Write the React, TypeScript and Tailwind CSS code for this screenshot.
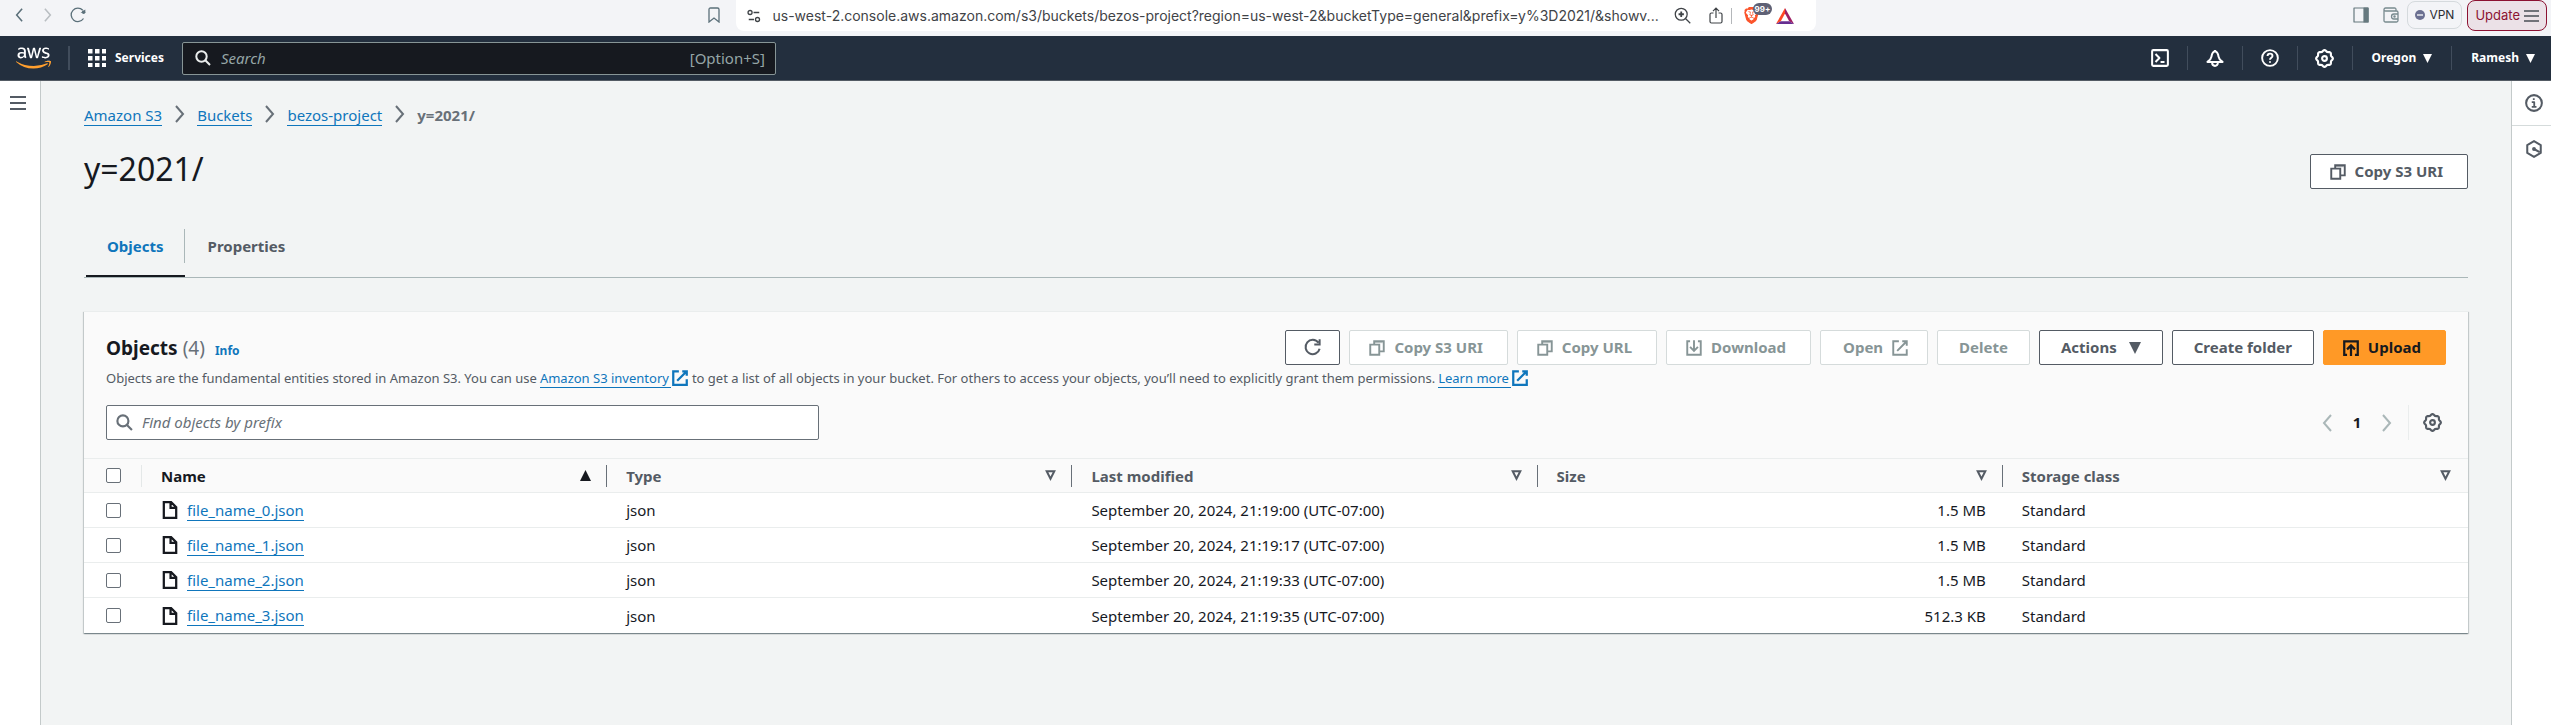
import type { ReactNode } from "react";
import { FaAws, FaBrave } from "react-icons/fa6";

function Icon({ children, className = "size-[18px]", strokeWidth = 2 }: { children: ReactNode; className?: string; strokeWidth?: number }) {
  return (
    <svg viewBox="0 0 16 16" fill="none" stroke="currentColor" strokeWidth={strokeWidth} strokeLinejoin="round" className={`shrink-0 ${className}`} aria-hidden="true">
      {children}
    </svg>
  );
}

const gearOutline =
  Array.from({ length: 96 }, (_, i) => {
    const a = (i / 96) * Math.PI * 2;
    const r = 6.5 + 0.55 * Math.cos(8 * a);
    return `${i ? "L" : "M"}${(8 + r * Math.sin(a)).toFixed(2)} ${(8 - r * Math.cos(a)).toFixed(2)}`;
  }).join("") + "Z";

const CopyIcon = () => (
  <Icon strokeWidth={1.7}>
    <path d="M2 5h8v9H2zM5.5 5V2H14v9h-4" strokeLinejoin="miter" />
    <path d="M6 3.2h7" strokeWidth="1" opacity=".5" />
  </Icon>
);
const DownloadIcon = () => (
  <Icon strokeWidth={1.7}>
    <path d="M4.5 2H2v12h12V2h-2.5M8 1v9M4.5 7 8 10.5 11.5 7" strokeLinejoin="miter" />
  </Icon>
);
const UploadIcon = () => (
  <Icon>
    <path d="M4.5 14H2V2h12v12h-2.5M8 15V6M4.5 9.2 8 5.7l3.5 3.5" strokeLinejoin="miter" />
  </Icon>
);
const ExternalIcon = ({ strokeWidth = 1.7 }: { strokeWidth?: number }) => (
  <Icon strokeWidth={strokeWidth}>
    <path d="M10 2h4v4M5.5 10.5 14 2M14 9v5H2V2h5" strokeLinejoin="miter" />
  </Icon>
);
const SearchIcon = ({ className }: { className?: string }) => (
  <Icon className={className}>
    <circle cx="6.5" cy="6.5" r="5.2" />
    <path d="m10.3 10.3 4.7 4.7" />
  </Icon>
);
const GearIcon = () => (
  <Icon className="size-[19px]" strokeWidth={1.8}>
    <path d={gearOutline} />
    <circle cx="8" cy="8" r="2" />
  </Icon>
);
const FileIcon = () => (
  <Icon>
    <path d="M2.5 1h6.5l4.5 4.5V15h-11zM8.500 1v5h5" strokeLinejoin="miter" />
  </Icon>
);
const Chevron = ({ left = false, className = "h-[18px]" }: { left?: boolean; className?: string }) => (
  <svg viewBox="0 0 10 18" fill="none" stroke="currentColor" strokeWidth="2" className={`w-2.5 shrink-0 ${className}`} aria-hidden="true">
    <path d={left ? "M9 1 2 9l7 8" : "M1 1l7 8-7 8"} />
  </svg>
);
const Triangle = ({ className = "size-[11px]" }: { className?: string }) => (
  <svg viewBox="0 0 10 10" fill="currentColor" className={`shrink-0 ${className}`} aria-hidden="true">
    <path d="M0 0h10L5 10z" />
  </svg>
);

function BrowserBar() {
  return (
    <div className="grid h-9 grid-cols-[1fr_minmax(0,1080px)_1fr] items-start bg-[#f3f4f7]">
      <div className="flex h-[30px] items-center pr-4 pl-3.5 text-[#5b707a]">
        <button aria-label="Back">
          <Chevron left className="h-[14px]" />
        </button>
        <button aria-label="Forward" className="ml-[19px] text-[#b9bec2]">
          <Chevron className="h-[14px]" />
        </button>
        <button aria-label="Reload" className="ml-[17px]">
          <Icon className="size-4" strokeWidth={1.3}>
            <path d="M13.5 11.5A6.7 6.7 0 1 1 12.8 3.3" />
            <path d="M10.5 5.8h4.8V2.5z" fill="currentColor" stroke="none" />
            <circle cx="13.6" cy="5.2" r="1.7" fill="currentColor" stroke="none" />
          </Icon>
        </button>
        <button aria-label="Bookmark this page" className="ml-auto">
          <svg viewBox="0 0 12 16" fill="none" stroke="currentColor" strokeWidth="1.3" className="h-4 w-3">
            <path d="M1 2.500C1 1.500 1.500 1 2.500 1h7c1 0 1.500.5 1.500 1.500V15l-5-4-5 4z" />
          </svg>
        </button>
      </div>

      <div className="flex h-[31px] items-center rounded-b-lg bg-white pr-[22px] pl-[11px] text-[#3f4347]">
        <Icon className="size-3.5" strokeWidth={1.5}>
          <circle cx="3.5" cy="4" r="2.3" />
          <circle cx="12" cy="12" r="2.3" />
          <path d="M7.5 4H14M2 12h6" />
        </Icon>
        <span className="ml-3 min-w-0 flex-1 truncate font-[Inter,sans-serif] text-sm">
          us-west-2.console.aws.amazon.com/s3/buckets/bezos-project?region=us-west-2&amp;bucketType=general&amp;prefix=y%3D2021/&amp;showv...
        </span>
        <button aria-label="Zoom" className="ml-3">
          <Icon className="size-[17px]" strokeWidth={1.2}>
            <circle cx="6.8" cy="6.8" r="5.6" />
            <path d="m10.8 10.8 4.5 4.5" />
            <path d="M6.8 4.3v5M4.3 6.8h5" strokeWidth="1.7" />
          </Icon>
        </button>
        <button aria-label="Share" className="ml-[18px]">
          <svg viewBox="0 0 14 17" fill="none" stroke="currentColor" strokeWidth="1.2" className="h-[17px] w-3.5">
            <path d="M4.500 6h-2C1.500 6 1 6.500 1 7.500v7c0 1 .5 1.500 1.500 1.500h9c1 0 1.500-.5 1.500-1.500v-7c0-1-.5-1.500-1.500-1.500h-2M7 11V1.500M4 4.200l3-3 3 3" />
          </svg>
        </button>
        <span className="ml-2 h-4 w-px bg-[#b4b7ba]" />
        <button aria-label="Brave Shields" className="relative ml-[11px] text-[#fb542b]">
          <FaBrave className="size-[17px]" />
          <span className="absolute -top-1 left-2.5 rounded-md bg-[#5e6175] px-0.5 font-[Inter,sans-serif] text-[8px] leading-3 font-bold text-white">99+</span>
        </button>
        <button aria-label="Brave Rewards" className="ml-4">
          <svg viewBox="0 0 18 16" className="h-4 w-[18px]">
            <path d="M9 0 0 16l4.800-2.800L9 5.500z" fill="#ff4724" />
            <path d="M9 0l9 16-4.800-2.800L9 5.500z" fill="#9e1f63" />
            <path d="M0 16h18l-4.800-2.800H4.800z" fill="#662d91" />
          </svg>
        </button>
      </div>

      <div className="flex items-start justify-end pr-1 font-[Inter,sans-serif] text-xs">
        <button aria-label="Sidebar" className="mt-[7px] text-[#66797f]">
          <Icon className="size-4" strokeWidth={1.2}>
            <path d="M1 1h14v14H1z" />
            <path d="M11 1h4v14h-4z" fill="currentColor" />
          </Icon>
        </button>
        <button aria-label="Wallet" className="mt-[7px] mr-2 ml-3.5 text-[#788a8f]">
          <Icon className="size-4" strokeWidth={1.3}>
            <path d="M13 4V2.500C13 1.500 12.500 1 11.500 1h-9a1.500 1.500 0 0 0 0 3h11c1 0 1.500.5 1.500 1.500v8c0 1-.5 1.500-1.500 1.500h-11C1.500 15 1 14.500 1 13.500v-11M15 7h-4a2.500 2.500 0 0 0 0 5h4" />
            <circle cx="11.5" cy="9.5" r=".6" fill="currentColor" />
          </Icon>
        </button>
        <button className="mt-px mr-[5px] flex h-7 items-center gap-1 rounded-lg border border-[#d5dadd] px-[7px] text-[#2b2e33]">
          <svg viewBox="0 0 10 10" className="size-2.5">
            <circle cx="5" cy="5" r="5" fill="#6b7091" />
            <path d="M2 5h6" stroke="#f3f4f7" strokeWidth="1.4" />
          </svg>
          VPN
        </button>
        <button className="flex h-[31px] items-center gap-1 rounded-lg border border-[#8c1232] bg-[#ebe1e7] px-[7px] text-[13px] text-[#8c1232]">
          Update
          <svg viewBox="0 0 15 12" stroke="#4a4d55" strokeWidth="1.3" className="h-3 w-[15px]">
            <path d="M0 1h15M0 6h15M0 11h15" />
          </svg>
        </button>
      </div>
    </div>
  );
}

const NavDivider = () => <span className="h-6 w-px shrink-0 bg-[#414d5c]" />;

function TopNav() {
  return (
    <header className="flex h-[45px] items-center border-b border-[#545b64] bg-[#232f3e] text-xs font-bold text-white">
      <a href="#home" aria-label="AWS Console Home" className="mr-[17px] ml-4">
        <svg className="absolute size-0" aria-hidden="true">
          <linearGradient id="aws-fill" gradientUnits="userSpaceOnUse" x1="0" y1="0" x2="0" y2="512">
            <stop offset=".61" stopColor="#ffffff" />
            <stop offset=".61" stopColor="#ff9f2e" />
          </linearGradient>
        </svg>
        <FaAws fill="url(#aws-fill)" className="h-7 w-[35px]" />
      </a>
      <span className="h-6 w-0.5 bg-[#414d5c]" />
      <button className="ml-[18px] flex items-center gap-[9px]">
        <svg viewBox="0 0 18 18" fill="currentColor" className="size-[18px]" aria-hidden="true">
          {[0, 7, 14].map((y) => [0, 7, 14].map((x) => <rect key={`${x}-${y}`} x={x} y={y} width="4.5" height="4.5" />))}
        </svg>
        Services
      </button>
      <label className="ml-[18px] flex h-[33px] w-[594px] items-center rounded-xs border border-[#879596] bg-[#16191f] pr-2.5 pl-3 text-[15px] font-normal text-[#95a5a6]">
        <SearchIcon className="size-4 text-[#eaeded]" />
        <input aria-label="Search" placeholder="Search" className="ml-2.5 min-w-0 flex-1 bg-transparent italic outline-none placeholder:text-[#95a5a6]" />
        <span>[Option+S]</span>
      </label>

      <div className="ml-auto flex items-center">
        <button aria-label="CloudShell" className="flex w-[54px] justify-center">
          <Icon strokeWidth={1.8}>
            <rect x="1" y="1" width="14" height="14" rx="1" />
            <path d="M4 4.500 7.500 8 4 11.500M8.500 11.500H12" />
          </Icon>
        </button>
        <NavDivider />
        <button aria-label="Notifications" className="flex w-[54px] justify-center">
          <Icon strokeWidth={1.8}>
            <path d="M8 .8v1.200M8 2C6 2.300 5.200 4.500 4.800 7 4.500 9 3 10.300 1.300 11.500h13.400C13 10.300 11.500 9 11.200 7 10.800 4.500 10 2.300 8 2z" />
            <path d="M5.500 11.500v1a2.500 2.500 0 0 0 5 0v-1" />
          </Icon>
        </button>
        <NavDivider />
        <button aria-label="Help" className="flex w-[54px] justify-center">
          <Icon strokeWidth={1.7}>
            <circle cx="8" cy="8" r="7" />
            <path d="M5.800 6.300c0-1.400 1-2.200 2.200-2.200s2.200.8 2.200 2.100C10.200 7.700 8 7.800 8 9.500M8 10.800v1.500" />
          </Icon>
        </button>
        <NavDivider />
        <button aria-label="Settings" className="flex w-[54px] justify-center">
          <GearIcon />
        </button>
        <NavDivider />
        <button className="flex items-center gap-[7px] px-[19px]">
          Oregon
          <Triangle className="size-[9px]" />
        </button>
        <NavDivider />
        <button className="flex items-center gap-[7px] pr-4 pl-[19px]">
          Ramesh
          <Triangle className="size-[9px]" />
        </button>
      </div>
    </header>
  );
}

const crumbs = ["Amazon S3", "Buckets", "bezos-project"];

const tones = {
  normal: "border-[#545b64] bg-white text-[#545b64]",
  disabled: "border-[#d5dbdb] bg-white text-[#879596]",
  primary: "border-[#ff9926] bg-[#ff9926] text-[#16191f]",
};
const paddings = {
  text: "px-[21px]",
  iconLeft: "pr-6 pl-[18px]",
  iconRight: "pr-[18px] pl-[22px]",
  iconOnly: "px-[17px]",
};

function Button({ tone = "normal", pad = "text", label, children }: { tone?: keyof typeof tones; pad?: keyof typeof paddings; label?: string; children: ReactNode }) {
  return (
    <button
      disabled={tone === "disabled"}
      aria-label={label}
      className={`flex h-[35px] items-center gap-2 rounded-xs border text-[15px] font-bold whitespace-nowrap ${paddings[pad]} ${tones[tone]}`}
    >
      {children}
    </button>
  );
}

const columns = ["Name", "Type", "Last modified", "Size", "Storage class"];
const rows = [
  { name: "file_name_0.json", modified: "September 20, 2024, 21:19:00 (UTC-07:00)", size: "1.5 MB" },
  { name: "file_name_1.json", modified: "September 20, 2024, 21:19:17 (UTC-07:00)", size: "1.5 MB" },
  { name: "file_name_2.json", modified: "September 20, 2024, 21:19:33 (UTC-07:00)", size: "1.5 MB" },
  { name: "file_name_3.json", modified: "September 20, 2024, 21:19:35 (UTC-07:00)", size: "512.3 KB" },
];

const checkbox = "block size-[15px] appearance-none rounded-xs border border-[#687078] bg-white";

function ObjectsTable() {
  return (
    <table className="w-full table-fixed border-separate border-spacing-0 text-left text-[15px] leading-5 [&_tbody_tr:last-child_td]:border-b-0">
      <thead className="bg-[#fafafa] text-[#545b64]">
        <tr>
          <th className="h-[35px] w-[58px] border-y border-[#eaeded] p-0">
            <div className="flex h-[22px] items-center border-r border-[#e4e8e8] pl-[22px]">
              <input type="checkbox" aria-label="Select all objects" className={checkbox} />
            </div>
          </th>
          {columns.map((c, i) => (
            <th key={c} className="h-[35px] border-y border-[#eaeded] p-0">
              <div className={`flex h-[22px] items-center justify-between pl-[19px] ${i < 4 ? "border-r border-[#687078] pr-[15px]" : "pr-[17px]"} ${i === 0 ? "text-[#16191f]" : ""}`}>
                {c}
                {i === 0 ? (
                  <Triangle className="size-[11px] rotate-180" />
                ) : (
                  <svg viewBox="0 0 11 11" fill="none" stroke="currentColor" strokeWidth="2" className="size-[11px]" aria-hidden="true">
                    <path d="M1.7 1.2h7.6L5.5 8.7z" />
                  </svg>
                )}
              </div>
            </th>
          ))}
        </tr>
      </thead>
      <tbody className="bg-white text-[#16191f] [&_td]:h-[35px] [&_td]:border-b [&_td]:border-[#eaeded] [&_td]:py-0 [&_td]:pr-[17px] [&_td]:pl-[19px]">
        {rows.map((r) => (
          <tr key={r.name}>
            <td>
              <input type="checkbox" aria-label={`Select ${r.name}`} className={`ml-[3px] ${checkbox}`} />
            </td>
            <td>
              <div className="flex items-center gap-2">
                <FileIcon />
                <a href={`#${r.name}`} className="border-b border-[#0f76bc] text-[#0f76bc]">
                  {r.name}
                </a>
              </div>
            </td>
            <td>json</td>
            <td>{r.modified}</td>
            <td className="text-right">{r.size}</td>
            <td>Standard</td>
          </tr>
        ))}
      </tbody>
    </table>
  );
}

const InlineLink = ({ href, children }: { href: string; children: ReactNode }) => (
  <a href={href} className="inline-flex text-[#0f76bc]">
    <span className="border-b border-[#0f76bc] pr-0.5">{children}</span>
    <ExternalIcon strokeWidth={2} />
  </a>
);

function ObjectsPanel() {
  return (
    <section className="mt-[33px] border-t border-[#eaeded] bg-[#fafafa] shadow-[0_1px_1px_rgba(0,28,36,0.3),1px_1px_1px_rgba(0,28,36,0.15),-1px_1px_1px_rgba(0,28,36,0.15)]">
      <div className="px-[22px] py-[18px]">
        <div className="flex flex-wrap items-center gap-[9px]">
          <h2 className="mr-auto flex items-baseline text-[19px] leading-6 font-bold text-[#16191f]">
            Objects
            <span className="ml-[5px] font-normal text-[#687078]">(4)</span>
            <a href="#info" className="ml-2.5 text-xs text-[#0f76bc]">
              Info
            </a>
          </h2>
          <Button label="Refresh" pad="iconOnly">
            <Icon className="size-[19px]" strokeWidth={1.7}>
              <path d="M9.5 5.5H14V1M14 9a6 6 0 1 1-1-5" strokeLinejoin="miter" />
            </Icon>
          </Button>
          <Button tone="disabled" pad="iconLeft">
            <CopyIcon />
            Copy S3 URI
          </Button>
          <Button tone="disabled" pad="iconLeft">
            <CopyIcon />
            Copy URL
          </Button>
          <Button tone="disabled" pad="iconLeft">
            <DownloadIcon />
            Download
          </Button>
          <Button tone="disabled" pad="iconRight">
            Open
            <ExternalIcon />
          </Button>
          <Button tone="disabled">Delete</Button>
          <Button>
            Actions
            <Triangle className="ml-1 size-3" />
          </Button>
          <Button>Create folder</Button>
          <Button tone="primary" pad="iconLeft">
            <UploadIcon />
            Upload
          </Button>
        </div>
        <p className="mt-1 flex flex-wrap gap-x-[3px] text-[13px] leading-[18px] text-[#545b64]">
          <span>Objects are the fundamental entities stored in Amazon S3. You can use</span>
          <InlineLink href="#inventory">Amazon S3 inventory</InlineLink>
          <span>to get a list of all objects in your bucket. For others to access your objects, you’ll need to explicitly grant them permissions.</span>
          <InlineLink href="#learn-more">Learn more</InlineLink>
        </p>
        <div className="mt-[17px] flex items-center">
          <label className="flex h-[35px] w-[713px] items-center gap-[9px] rounded-xs border border-[#687078] bg-white px-[9px] text-[#687078]">
            <SearchIcon className="size-[17px]" />
            <input aria-label="Find objects by prefix" placeholder="Find objects by prefix" className="min-w-0 flex-1 bg-transparent text-[15px] italic outline-none placeholder:text-[#687078]" />
          </label>
          <div className="ml-auto flex h-[35px] items-center pr-1">
            <button aria-label="Previous page" className="text-[#aab7b8]">
              <Chevron left />
            </button>
            <button className="w-[50px] text-center text-[15px] font-bold text-[#16191f]">1</button>
            <button aria-label="Next page" className="text-[#aab7b8]">
              <Chevron />
            </button>
            <button aria-label="Preferences" className="ml-4 flex h-full items-center border-l border-[#eaeded] pl-3.5 text-[#545b64]">
              <GearIcon />
            </button>
          </div>
        </div>
      </div>
      <ObjectsTable />
    </section>
  );
}

export default function App() {
  return (
    <div className="flex min-h-screen flex-col bg-[#f2f4f4] font-['Noto_Sans',sans-serif] text-[#16191f]">
      <BrowserBar />
      <TopNav />
      <div className="flex flex-1">
        <aside className="w-[41px] shrink-0 border-r border-[#c4caca] bg-white">
          <button aria-label="Open navigation" className="mt-[15px] ml-2.5 block text-[#545b64]">
            <svg viewBox="0 0 16 14" stroke="currentColor" strokeWidth="2" className="h-3.5 w-4">
              <path d="M0 1h16M0 7h16M0 13h16" />
            </svg>
          </button>
        </aside>

        <main className="min-w-0 flex-1 px-[43px] pt-6">
          <nav aria-label="Breadcrumbs" className="flex items-start text-[15px] leading-5">
            {crumbs.map((c) => (
              <span key={c} className="flex items-start">
                <a href={`#${c}`} className="border-b border-[#0f76bc] text-[#0f76bc]">
                  {c}
                </a>
                <Chevron className="mr-3 ml-[13px] h-[18px] text-[#687078]" />
              </span>
            ))}
            <span className="font-bold text-[#687078]">y=2021/</span>
          </nav>

          <div className="mt-7 flex items-start justify-between">
            <h1 className="text-[32px] leading-[30px]">y=2021/</h1>
            <Button pad="iconLeft">
              <CopyIcon />
              Copy S3 URI
            </Button>
          </div>

          <div role="tablist" className="mt-10 flex border-b border-[#aab7b8] pl-0.5 text-[15px] font-bold">
            <button role="tab" aria-selected="true" className="border-b-2 border-[#16191f] pb-3 text-[#0f76bc]">
              <span className="flex h-[34px] items-center border-r border-[#aab7b8] pr-5 pl-[21px]">Objects</span>
            </button>
            <button role="tab" aria-selected="false" className="pb-3.5 text-[#545b64]">
              <span className="flex h-[34px] items-center px-[23px]">Properties</span>
            </button>
          </div>

          <ObjectsPanel />
        </main>

        <aside className="flex w-10 shrink-0 flex-col border-l border-[#c4caca] bg-white text-[#545b64]">
          <button aria-label="Info" className="flex h-[45px] items-center border-b border-[#d5dbdb] pl-[13px]">
            <Icon strokeWidth={1.8}>
              <circle cx="8" cy="8" r="7" />
              <path d="M6 7.300h2.200v4.200M6 11.500h4.200M7 4.600h1.600" strokeWidth="1.6" />
            </Icon>
          </button>
          <button aria-label="Diagnose" className="flex h-[45px] items-center pl-[13px]">
            <Icon strokeWidth={1.8}>
              <path d="M8 1 14 4.500v7L8 15l-6-3.500v-7z" />
              <circle cx="8" cy="8" r="1.7" fill="currentColor" stroke="none" />
              <path d="m8 8 5 2.800" />
            </Icon>
          </button>
        </aside>
      </div>
    </div>
  );
}
